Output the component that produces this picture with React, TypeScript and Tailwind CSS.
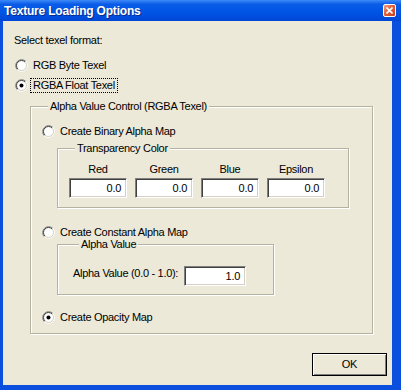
import React from "react";

const FONT = { fontFamily: '"Liberation Sans", Arial, sans-serif' };

function Radio({ checked }: { checked?: boolean }) {
  return (
    <svg width="13" height="13" viewBox="0 0 13 13" className="shrink-0">
      <circle cx="6.5" cy="6.5" r="5" fill="#fff" />
      <path d="M2.26 10.74 A6 6 0 0 1 10.74 2.26" fill="none" stroke="#808080" />
      <path d="M10.74 2.26 A6 6 0 0 1 2.26 10.74" fill="none" stroke="#ffffff" />
      <path d="M2.96 10.04 A5 5 0 0 1 10.04 2.96" fill="none" stroke="#404040" />
      <path d="M10.04 2.96 A5 5 0 0 1 2.96 10.04" fill="none" stroke="#d4d0c8" />
      {checked && <circle cx="6.5" cy="6.5" r="2" fill="#000" />}
    </svg>
  );
}

function RadioRow({ label, checked, focused, className = "" }: { label: string; checked?: boolean; focused?: boolean; className?: string }) {
  return (
    <div className={`flex items-center gap-[4px] h-[13px] ${className}`}>
      <Radio checked={checked} />
      <span className={`px-[1px] leading-[11px] whitespace-nowrap ${focused ? "outline-1 outline-offset-1 outline-dotted outline-black" : ""}`}>{label}</span>
    </div>
  );
}

function Field({ value, className = "" }: { value: string; className?: string }) {
  return (
    <div
      className={`h-[20px] bg-white border border-t-[#808080] border-l-[#808080] border-b-white border-r-white shadow-[inset_1px_1px_0_#404040,inset_-1px_-1px_0_#d4d0c8] flex items-center justify-end pr-[5px] ${className}`}
    >
      {value}
    </div>
  );
}

function Group({ title, className = "", children }: { title: string; className?: string; children: React.ReactNode }) {
  return (
    <fieldset className={`border border-[#b5b29f] shadow-[inset_1px_1px_0_#fff,1px_1px_0_#fff] ${className}`}>
      <legend className="ml-[6px] px-[2px] leading-[11px] bg-[#ece9d8] whitespace-nowrap">{title}</legend>
      {children}
    </fieldset>
  );
}

export default function App() {
  const channels = ["Red", "Green", "Blue", "Epsilon"];

  return (
    <div className="w-[401px] h-[390px] flex flex-col bg-[#0a4fdd] text-[11px] tracking-[-0.3px] text-black" style={FONT}>
      <div className="h-[21px] shrink-0 flex items-center justify-between bg-[linear-gradient(to_bottom,#3d8af7_0%,#0a5ce8_20%,#0054e3_60%,#0046d6_100%)]">
        <span className="ml-[4px] text-white font-bold text-[12px] tracking-[-0.2px] [text-shadow:1px_1px_#0a2a8a]">Texture Loading Options</span>
        <div className="mr-[5px] w-[13px] h-[13px] rounded-[2px] border border-white bg-[linear-gradient(135deg,#f0a083_0%,#e0603c_45%,#c6401c_100%)] flex items-center justify-center">
          <svg width="7" height="7" viewBox="0 0 7 7">
            <path d="M0.5 0.5 L6.5 6.5 M6.5 0.5 L0.5 6.5" stroke="#fff" strokeWidth="1.6" />
          </svg>
        </div>
      </div>

      <div className="flex-1 flex border-l-[3px] border-r-[9px] border-b-[5px] border-[#0a4fdd]">
        <div className="flex-1 bg-[#ece9d8] flex flex-col">
          <p className="mt-[13px] ml-[11px] leading-[13px]">Select texel format:</p>
          <RadioRow className="mt-[12px] ml-[12px]" label="RGB Byte Texel" />
          <RadioRow className="mt-[7px] ml-[12px]" label="RGBA Float Texel" checked focused />

          <Group title="Alpha Value Control (RGBA Texel)" className="mt-[9px] ml-[27px] w-[343px] pt-[13px] pl-[11px] pb-[9px]">
            <RadioRow label="Create Binary Alpha Map" />

            <Group title="Transparency Color" className="mt-[5px] ml-[15px] w-[292px] pt-[9px] pl-[11px] pb-[9px]">
              <div className="grid grid-cols-[58px_58px_58px_58px] gap-x-[8px]">
                {channels.map((c) => (
                  <div key={c} className="flex flex-col">
                    <span className="text-center leading-[13px]">{c}</span>
                    <Field value="0.0" className="mt-[2px]" />
                  </div>
                ))}
              </div>
            </Group>

            <RadioRow className="mt-[18px]" label="Create Constant Alpha Map" />

            <Group title="Alpha Value" className="ml-[15px] w-[217px] pt-[16px] pl-[15px] pb-[8px]">
              <div className="flex items-start">
                <span className="w-[111px] leading-[13px] mt-[1px] whitespace-nowrap">Alpha Value (0.0 - 1.0):</span>
                <Field value="1.0" className="w-[62px]" />
              </div>
            </Group>

            <RadioRow className="mt-[16px]" label="Create Opacity Map" checked />
          </Group>

          <button className="self-end mt-[19px] mr-[5px] w-[75px] h-[23px] border border-black bg-[#ece9d8] shadow-[inset_1px_1px_0_#fff,inset_-1px_-1px_0_#808080] text-[11px] flex items-center justify-center" style={FONT}>
            OK
          </button>
        </div>
      </div>
    </div>
  );
}
